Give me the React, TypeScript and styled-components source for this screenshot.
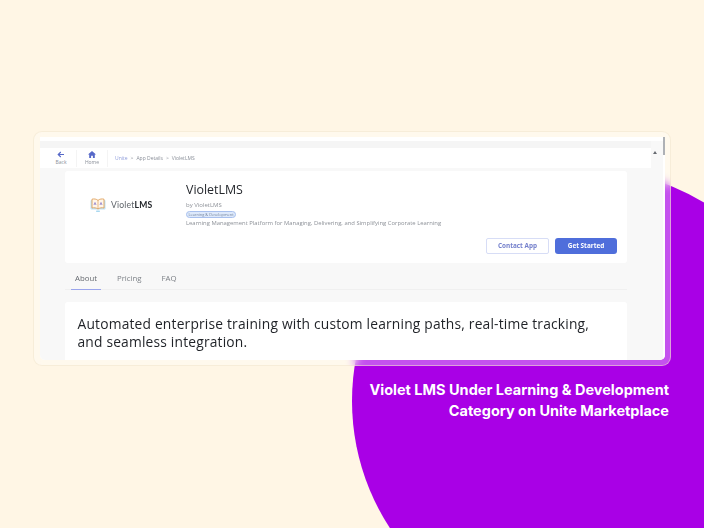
import React from "react";
import styled, { createGlobalStyle } from "styled-components";

const Global = createGlobalStyle`
  html, body { margin: 0; padding: 0; }
  body { font-family: "Open Sans", sans-serif; background: #fff6e5; }
  * { box-sizing: border-box; }
`;

const Page = styled.div`
  position: relative;
  width: 704px;
  height: 528px;
  overflow: hidden;
  background: #fff6e5;
  padding: 131px 33px 0;
`;
const Blob = styled.div`
  position: absolute;
  left: 352px;
  top: 169px;
  width: 464px;
  height: 464px;
  border-radius: 50%;
  background: #a900e6;
`;
const Frame = styled.div`
  position: relative;
  width: 638px;
  height: 235px;
  padding: 5px 5px 5px 6px;
  border-radius: 9px;
  border: 1px solid rgba(240, 228, 200, 0.55);
  background: rgba(255, 255, 255, 0.32);
  backdrop-filter: blur(5px);
`;
const Window = styled.div`
  display: grid;
  grid-template-columns: 1fr 14px;
  height: 100%;
  border-radius: 0 0 5px 5px;
  overflow: hidden;
  background: #ffffff;
`;
const Main = styled.div`
  display: flex;
  flex-direction: column;
  padding-top: 4px;
  min-width: 0;
`;
const TopStrip = styled.div`
  height: 7px;
  flex: none;
  background: #f5f5f5;
`;
const Header = styled.div`
  display: flex;
  align-items: center;
  height: 20px;
  flex: none;
  background: #ffffff;
`;
const NavButton = styled.div<{ $w: number; $pad: number }>`
  width: ${(p) => p.$w}px;
  padding-left: ${(p) => p.$pad}px;
  height: 17px;
  display: flex;
  flex-direction: column;
  align-items: center;
  justify-content: center;
  border-right: 1px solid #f4f4f4;
  color: #8a8f99;
  font-size: 5px;
  line-height: 6px;
  gap: 1px;
  svg { display: block; }
`;
const Crumbs = styled.div`
  display: flex;
  align-items: center;
  gap: 3px;
  padding-left: 7px;
  font-size: 5px;
  color: #8a8f99;
`;
const CrumbLink = styled.span`
  color: #8f9ddb;
`;
const Content = styled.div`
  flex: 1;
  min-height: 0;
  background: #f8f8f8;
  padding: 3px 24px 0 25px;
  overflow: hidden;
`;
const TopCard = styled.div`
  height: 92px;
  background: #ffffff;
  border-radius: 3px;
  display: grid;
  grid-template-columns: 121px 1fr;
  position: relative;
`;
const LogoCell = styled.div`
  display: flex;
  align-items: center;
  gap: 4.5px;
  padding: 0 0 25px 23.5px;
`;
const LogoText = styled.span`
  font-family: "Lato", sans-serif;
  font-size: 8.6px;
  color: #5f646a;
  letter-spacing: 0.2px;
  b { color: #23262b; font-weight: 700; }
`;
const Info = styled.div`
  padding-top: 11px;
  display: flex;
  flex-direction: column;
  align-items: flex-start;
`;
const Title = styled.div`
  font-size: 12.4px;
  line-height: 16px;
  color: #24272c;
`;
const Vendor = styled.div`
  font-size: 6px;
  line-height: 7px;
  margin-top: 3.5px;
  color: #8d9198;
`;
const Badge = styled.div`
  margin-top: 2px;
  height: 7px;
  width: 50px;
  border-radius: 4px;
  border: 1px solid #a8c0ee;
  background: #dde9fb;
  color: #76869f;
  font-size: 3.9px;
  line-height: 5px;
  text-align: center;
  white-space: nowrap;
`;
const Desc = styled.div`
  margin-top: 1.5px;
  font-size: 5.89px;
  line-height: 9px;
  color: #8d9198;
  white-space: nowrap;
`;
const Actions = styled.div`
  position: absolute;
  right: 10px;
  bottom: 9.5px;
  display: flex;
  align-items: center;
  gap: 6px;
`;
const OutlineButton = styled.div`
  width: 63px;
  height: 16px;
  border-radius: 2px;
  border: 1px solid #d7ddf6;
  background: #fff;
  color: #7480cc;
  font-size: 6.4px;
  font-weight: 700;
  display: flex;
  align-items: center;
  justify-content: center;
`;
const SolidButton = styled.div`
  width: 62px;
  height: 16px;
  border-radius: 3px;
  background: #4f6edb;
  color: #fff;
  font-size: 6.4px;
  font-weight: 700;
  display: flex;
  align-items: center;
  justify-content: center;
`;
const Tabs = styled.div`
  display: flex;
  height: 27px;
  padding-left: 6px;
  border-bottom: 1px solid #f0f0f0;
  align-items: flex-end;
`;
const Tab = styled.div<{ $active?: boolean }>`
  padding: 0 4px;
  margin-right: 12px;
  height: 18px;
  font-size: 7.8px;
  line-height: 13px;
  color: ${(p) => (p.$active ? "#666a70" : "#7d8187")};
  border-bottom: 1px solid ${(p) => (p.$active ? "#9aa5ec" : "transparent")};
  margin-bottom: -1px;
`;
const BodyCard = styled.div`
  margin-top: 12px;
  height: 90px;
  background: #fff;
  border-radius: 3px 3px 0 0;
  padding: 13px 12px 0 12.5px;
  font-size: 13.8px;
  letter-spacing: 0.19px;
  line-height: 18.3px;
  color: #1f2227;
  font-weight: 500;
`;
const ScrollTrack = styled.div`
  position: relative;
  margin-top: 4px;
  background: #f8f8f8;
  border-right: 2px solid #fff;
`;
const ScrollArrow = styled.div`
  position: absolute;
  left: 2px;
  top: 10px;
  width: 0;
  height: 0;
  border-left: 2px solid transparent;
  border-right: 2px solid transparent;
  border-bottom: 3px solid #666a70;
`;
const ScrollThumb = styled.div`
  position: absolute;
  right: -2px;
  top: -4px;
  width: 2px;
  height: 18px;
  background: #aeb1b6;
`;
const Caption = styled.div`
  position: relative;
  margin-top: 13px;
  width: 636px;
  text-align: right;
  font-family: "Inter", sans-serif;
  font-weight: 700;
  font-size: 14.5px;
  line-height: 21px;
  color: #ffffff;
`;

const BookIcon = () => (
  <svg width="18" height="18" viewBox="0 0 18 18" fill="none">
    <rect x="1.5" y="4" width="15" height="9.5" rx="1" fill="#bfe2f5" />
    <path d="M3 3.2 C5 2.6 7.5 3 9 4.4 C10.5 3 13 2.6 15 3.2 V12 C13 11.5 10.5 11.8 9 13 C7.5 11.8 5 11.5 3 12 Z" fill="#fff6ea" stroke="#e0a05a" strokeWidth="0.9" />
    <path d="M9 4.4 V13" stroke="#e0a05a" strokeWidth="0.7" />
    <path d="M5 9 L6 6.5 L7 9 M11 9 L12 6.5 L13 9" stroke="#8a78c8" strokeWidth="0.8" />
    <rect x="7" y="14.5" width="4" height="1.4" rx="0.7" fill="#a9d8f0" />
  </svg>
);

export default function App() {
  return (
    <Page>
      <Global />
      <Blob />
      <Frame>
        <Window>
          <Main>
            <TopStrip />
            <Header>
              <NavButton $w={37} $pad={6}>
                <svg width="8" height="7" viewBox="0 0 8 7" fill="none">
                  <path d="M7 3.5H1.3M3.8 1L1.2 3.5L3.8 6" stroke="#5668c8" strokeWidth="1.1" />
                </svg>
                Back
              </NavButton>
              <NavButton $w={31} $pad={0}>
                <svg width="8" height="7" viewBox="0 0 8 7">
                  <path d="M4 0L8 3.4H6.8V7H4.9V4.8H3.1V7H1.2V3.4H0Z" fill="#5668c8" />
                </svg>
                Home
              </NavButton>
              <Crumbs>
                <CrumbLink>Unite</CrumbLink>
                <span>&gt;</span>
                <span>App Details</span>
                <span>&gt;</span>
                <span>VioletLMS</span>
              </Crumbs>
            </Header>
            <Content>
              <TopCard>
                <LogoCell>
                  <BookIcon />
                  <LogoText>
                    Violet<b>LMS</b>
                  </LogoText>
                </LogoCell>
                <Info>
                  <Title>VioletLMS</Title>
                  <Vendor>by VioletLMS</Vendor>
                  <Badge>Learning &amp; Development</Badge>
                  <Desc>Learning Management Platform for Managing, Delivering, and Simplifying Corporate Learning</Desc>
                </Info>
                <Actions>
                  <OutlineButton>Contact App</OutlineButton>
                  <SolidButton>Get Started</SolidButton>
                </Actions>
              </TopCard>
              <Tabs>
                <Tab $active>About</Tab>
                <Tab>Pricing</Tab>
                <Tab>FAQ</Tab>
              </Tabs>
              <BodyCard>
                Automated enterprise training with custom learning paths, real-time tracking, and seamless integration.
              </BodyCard>
            </Content>
          </Main>
          <ScrollTrack>
            <ScrollArrow />
            <ScrollThumb />
          </ScrollTrack>
        </Window>
      </Frame>
      <Caption>
        Violet LMS Under Learning &amp; Development
        <br />
        Category on Unite Marketplace
      </Caption>
    </Page>
  );
}
